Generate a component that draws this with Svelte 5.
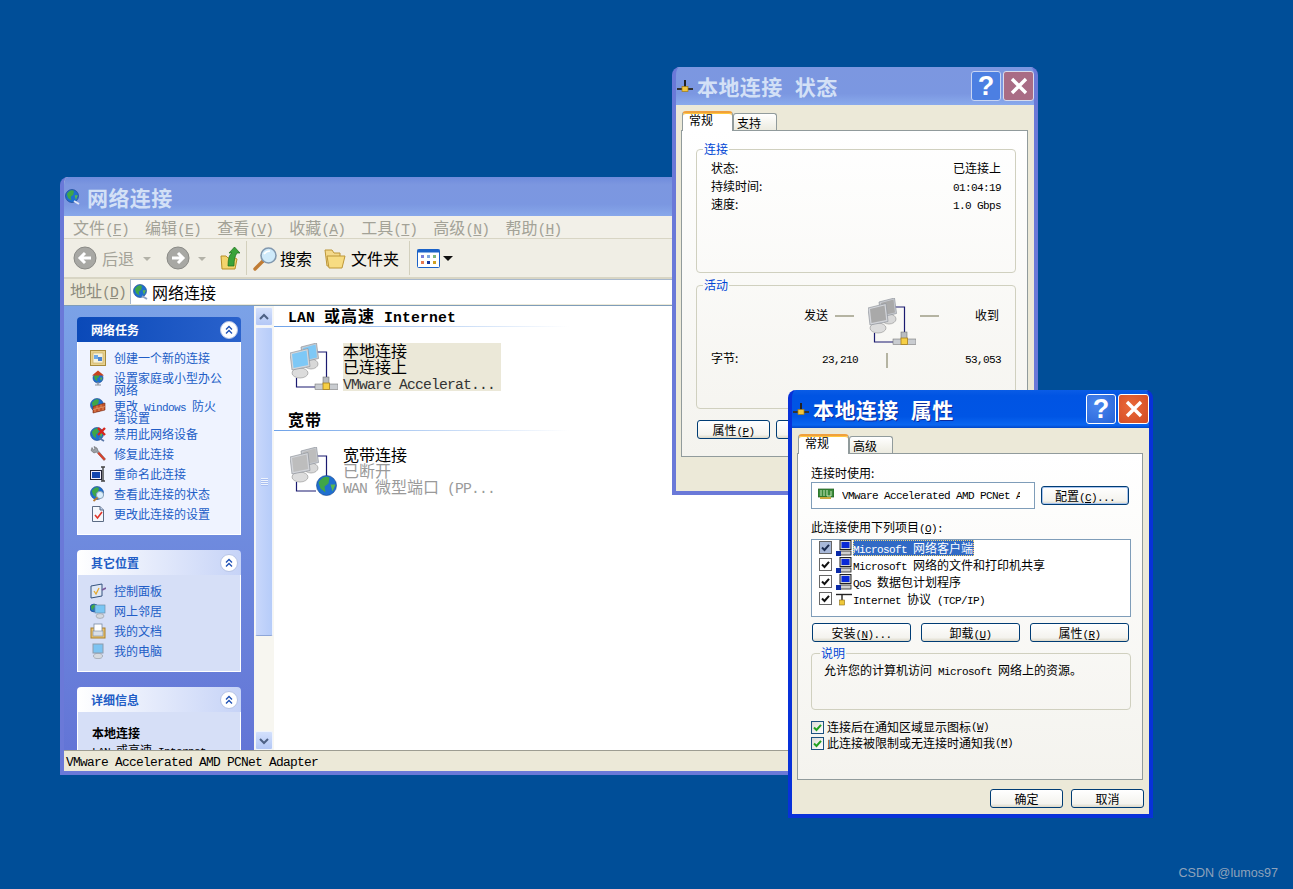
<script>
  const parts = (s) => s.split(/([\x20-\x7e]+)/).filter(Boolean);
  const isLat = (p) => /^[\x20-\x7e]/.test(p);
  const mn = (p) => p.split(/(\([A-Z]\))/).filter(Boolean);
  const menus = ['文件(F)', '编辑(E)', '查看(V)', '收藏(A)', '工具(T)', '高级(N)', '帮助(H)'];
  const tasks = [
    ['create', '创建一个新的连接'],
    ['home', '设置家庭或小型办公网络'],
    ['wall', '更改 Windows 防火墙设置'],
    ['off', '禁用此网络设备'],
    ['fix', '修复此连接'],
    ['name', '重命名此连接'],
    ['look', '查看此连接的状态'],
    ['doc', '更改此连接的设置']
  ];
  const places = [['cp', '控制面板'], ['nbr', '网上邻居'], ['docs', '我的文档'], ['pc', '我的电脑']];
  const comps = [
    ['client', 'Microsoft 网络客户端', true],
    ['share', 'Microsoft 网络的文件和打印机共享', false],
    ['share', 'QoS 数据包计划程序', false],
    ['tcp', 'Internet 协议 (TCP/IP)', false]
  ];
</script>

{#snippet T(s)}{#each parts(s) as p}{#if isLat(p)}<span class="lat">{#each mn(p) as m}{#if /^\([A-Z]\)$/.test(m)}(<u>{m[1]}</u>){:else}{m}{/if}{/each}</span>{:else}{p}{/if}{/each}{/snippet}

{#snippet globe(cx, cy, r)}
  <circle {cx} {cy} {r} fill="#1f6fd0" stroke="#123f86" stroke-width=".6" />
  <path d="M{cx - r * 0.8} {cy - r * 0.3}Q{cx - r * 0.3} {cy - r * 1.1} {cx + r * 0.3} {cy - r * 0.8}L{cx + r * 0.2} {cy - r * 0.2}L{cx - r * 0.2} {cy + r * 0.1}L{cx - r * 0.1} {cy + r * 0.7}L{cx - r * 0.6} {cy + r * 0.3}Z" fill="#3fa648" />
  <path d="M{cx + r * 0.4} {cy - r * 0.1}L{cx + r * 0.9} {cy - r * 0.1}L{cx + r * 0.6} {cy + r * 0.6}Z" fill="#5bb84e" />
{/snippet}

{#snippet small(kind)}
  <svg class="ic16" viewBox="0 0 16 16" width="16" height="16">
    {#if kind === 'create'}
      <rect x=".5" y=".5" width="15" height="15" fill="#e9d28f" stroke="#a78b3c" />
      <rect x="3" y="3" width="10" height="10" fill="#f6f2dc" stroke="#c3a65a" stroke-width=".6" />
      <rect x="4" y="5" width="4" height="4" fill="#6ea8e8" /><rect x="8" y="7" width="4" height="4" fill="#4d84d2" />
    {:else if kind === 'home'}
      {@render globe(8, 8, 5)}
      <path d="M8 0.5L14 5.5H2Z" fill="#c8421e" />
      <rect x="7.4" y="12" width="1.2" height="3" fill="#8a8f9a" /><rect x="5" y="14.5" width="6" height="1" fill="#8a8f9a" />
    {:else if kind === 'wall'}
      {@render globe(7, 7, 6.5)}
      <path d="M3 8.5L15 5V12L3 15Z" fill="#c4542a" stroke="#7a2a10" stroke-width=".6" />
      <path d="M3 11.5L15 8.5M7 7.5V10.5M11 6.5V9.5M5 11V14M9 10V13M13 9V12" stroke="#f0b080" stroke-width=".6" />
    {:else if kind === 'off'}
      {@render globe(7, 8, 6.5)}
      <path d="M8 2L15 9M15 2L8 9" stroke="#d8261c" stroke-width="2.4" />
      <path d="M9 12L14 15" stroke="#5a78a8" stroke-width="1.6" />
    {:else if kind === 'fix'}
      <path d="M2 1.5L1 4.5L4 7L6.5 6L14 14.5L15.5 13L8 4.5L7 2L4 0.5L5 3L3.5 4Z" fill="#9ba0a6" stroke="#555" stroke-width=".5" />
      <path d="M7.5 7.5L14 14.5L15.5 13L9 6Z" fill="#d8402c" />
    {:else if kind === 'name'}
      <rect x=".5" y="4.5" width="11" height="9" fill="#eef" stroke="#223" />
      <rect x="2" y="6" width="8" height="6" fill="#1446b0" />
      <path d="M11 1H15M13 1V15M11 15H15" stroke="#444" stroke-width="1.4" fill="none" />
    {:else if kind === 'look'}
      {@render globe(7, 7, 6.5)}
      <circle cx="10" cy="9" r="3.6" fill="#d9eefc" stroke="#8aa2b8" />
      <path d="M7.5 11.5L3.5 15" stroke="#b97a32" stroke-width="1.8" />
    {:else if kind === 'doc'}
      <path d="M2.5 .5H10L13.5 4V15.5H2.5Z" fill="#f4f7fc" stroke="#5b6b84" />
      <path d="M10 .5V4H13.5" fill="#bcd0ee" stroke="#5b6b84" />
      <path d="M5 9L7.5 12L12 6" stroke="#e0352a" stroke-width="1.6" fill="none" />
    {:else if kind === 'cp'}
      <path d="M1 3L12 1V13L1 15Z" fill="#dfe8f6" stroke="#34527f" />
      <path d="M4 8L6 11L9 5" stroke="#e5a82c" stroke-width="1.3" fill="none" />
      <path d="M12 7L16 5" stroke="#7a5a9c" stroke-width="1.6" />
    {:else if kind === 'nbr'}
      {@render globe(4, 5, 4)}
      <rect x="5" y="2" width="10" height="8" fill="#79c6f4" stroke="#6f8fa8" stroke-width=".7" />
      <ellipse cx="10" cy="13" rx="4" ry="2.4" fill="#d4d8de" stroke="#8d939c" stroke-width=".6" />
    {:else if kind === 'docs'}
      <rect x="1" y="5" width="14" height="10" fill="#ecc36e" stroke="#a9802c" />
      <rect x="4" y="1" width="8" height="9" fill="#fff" stroke="#7a8aa2" stroke-width=".8" />
      <rect x="3" y="8" width="10" height="5" fill="#d9dfe8" stroke="#7a8aa2" stroke-width=".6" />
    {:else if kind === 'pc'}
      <rect x="3" y="1" width="10" height="9" fill="#7dc4f2" stroke="#8d9cac" />
      <ellipse cx="8" cy="13" rx="4.500" ry="2.6" fill="#d6dae0" stroke="#8d939c" stroke-width=".6" />
    {/if}
  </svg>
{/snippet}

{#snippet lanIcon(color, tail)}
  <svg class="lan" viewBox="0 0 48 50" width="48" height="50">
    <path d="M27 9H36.5V37" fill="none" stroke="#1a1a70" stroke-width="1.2" />
    <path d="M6.5 35V44H26" fill="none" stroke="#1a1a70" stroke-width="1.2" />
    <ellipse cx="21" cy="21" rx="7" ry="5" fill="#d8d8d8" stroke="#8e8e8e" stroke-width=".6" />
    <path d="M11 4L26.5 0L28.5 15.5L13 19Z" fill="#c9ccd2" stroke="#8f939b" stroke-width=".7" />
    <path d="M13 5L25.5 1.5L27 14.5L14.5 17.5Z" fill={color} />
    <ellipse cx="10" cy="30" rx="8" ry="5" fill="#dcdcdc" stroke="#8e8e8e" stroke-width=".6" />
    <path d="M0 10L18 5.5L20 23.5L2 27Z" fill="#d3d5da" stroke="#8f939b" stroke-width=".7" />
    <path d="M2 11L16.5 7.5L18.2 22L3.5 25Z" fill={color} />
    {#if tail === 'tee'}
      <rect x="33" y="34" width="6" height="9" fill="#b9bcc0" stroke="#666" stroke-width=".5" />
      <rect x="25" y="41" width="23" height="5.5" fill="#c9ccd0" stroke="#666" stroke-width=".5" />
      <rect x="33" y="40" width="6.5" height="6.5" fill="#f6cf45" stroke="#a8801c" stroke-width=".8" />
    {:else}
      {@render globe(36.5, 38.5, 10)}
    {/if}
  </svg>
{/snippet}

{#snippet tee()}
  <svg viewBox="0 0 16 16" width="16" height="16">
    <rect x="7" y="2" width="2" height="8" fill="#222" />
    <rect x="0" y="10" width="16" height="2" fill="#333" />
    <rect x="5" y="8.5" width="6" height="5" fill="#f2c53c" stroke="#9c7a1a" stroke-width=".7" />
  </svg>
{/snippet}

{#snippet title(text)}
  <div class="tbar">
    <span class="ticon">{@render tee()}</span>
    <span class="ttext">{text}</span>
    <span class="tbtn help">?</span>
    <span class="tbtn close">
      <svg viewBox="0 0 20 20" width="20" height="20"><path d="M3 3L17 17M17 3L3 17" stroke="#fff" stroke-width="3.4" /></svg>
    </span>
  </div>
{/snippet}

{#snippet chev()}
  <span class="chev">
    <svg viewBox="0 0 10 10" width="10" height="10"><path d="M2 4.5L5 1.5L8 4.5M2 8.5L5 5.5L8 8.5" stroke="#1c4fb4" stroke-width="1.3" fill="none" /></svg>
  </span>
{/snippet}

{#snippet pcSmall(kind)}
  <svg viewBox="0 0 16 16" width="16" height="16">
    {#if kind === 'tcp'}
      <path d="M0 3.5H16" stroke="#222" stroke-width="1.4" /><path d="M6 4V10" stroke="#222" stroke-width="1.4" />
      <rect x="3.5" y="9" width="5" height="5" fill="#efc83a" stroke="#8a6c14" stroke-width=".6" />
    {:else}
      <rect x="4" y="0.5" width="11" height="9" fill="#d4d4d4" stroke="#222" />
      <rect x="5.5" y="2" width="8" height="6" fill="#0a2ad8" />
      <rect x="4" y="11" width="11" height="4" fill="#cfcfcf" stroke="#222" stroke-width=".8" />
      <rect x="0" y="11" width="5" height="5" fill="#0a2aa8" />
    {/if}
  </svg>
{/snippet}

{#snippet chk(color)}
  <svg viewBox="0 0 11 11" width="11" height="11"><path d="M2 5.5L4.5 8L9 2.8" stroke={color} stroke-width="2" fill="none" /></svg>
{/snippet}

<div class="desk">
  <!-- Network connections window -->
  <section class="win inactive net">
    <header class="nettitle">
      <svg viewBox="0 0 16 18" width="16" height="18">
        {@render globe(7, 8, 6.5)}
        <path d="M9 13L14 16" stroke="#dfe6f5" stroke-width="2" />
      </svg>
      <span>网络连接</span>
    </header>
    <nav class="menu">
      {#each menus as m}<span>{@render T(m)}</span>{/each}
    </nav>
    <div class="tools">
      <span class="round"><svg viewBox="0 0 24 24" width="24" height="24"><circle cx="12" cy="12" r="11" fill="#a8a8a4" stroke="#8a8a86" /><path d="M18 12H8M12 7L7 12L12 17" stroke="#fff" stroke-width="3" fill="none" /></svg></span>
      <span class="tl grey m5">后退</span>
      <span class="caret c1"></span>
      <span class="round m16"><svg viewBox="0 0 24 24" width="24" height="24"><circle cx="12" cy="12" r="11" fill="#a8a8a4" stroke="#8a8a86" /><path d="M6 12H16M12 7L17 12L12 17" stroke="#fff" stroke-width="3" fill="none" /></svg></span>
      <span class="caret c2"></span>
      <svg class="up" viewBox="0 0 20 24" width="20" height="24">
        <path d="M1 10H6L8 12H15L17 13L15 23H2Z" fill="#f3d46c" stroke="#b78f27" />
        <path d="M8 20Q8 9 12 7H9L14.500 1L20 7H17Q14 11 14 20Z" fill="#3aa33a" stroke="#1a6d1a" stroke-width=".7" />
      </svg>
      <i class="sep s1"></i>
      <svg class="srch" viewBox="0 0 25 25" width="25" height="25">
        <path d="M10 15L2 23" stroke="#c07c34" stroke-width="3.4" stroke-linecap="round" />
        <circle cx="15.5" cy="9.5" r="7.5" fill="#cfeafa" stroke="#8298ae" stroke-width="1.6" />
        <path d="M11 8Q13 5 17 5" stroke="#fff" stroke-width="1.6" fill="none" />
      </svg>
      <span class="tl m3">搜索</span>
      <svg class="fold" viewBox="0 0 23 21" width="23" height="21">
        <path d="M1 2H8L10 5H16V18H3Z" fill="#f4d98a" stroke="#bd9637" />
        <path d="M3 8H21L18 20H5Z" fill="#f7dc82" stroke="#bd9637" />
      </svg>
      <span class="tl m4">文件夹</span>
      <i class="sep s2"></i>
      <svg class="view" viewBox="0 0 23 19" width="23" height="19">
        <rect x=".5" y=".5" width="22" height="18" rx="1" fill="#fff" stroke="#1b62c8" />
        <rect x=".5" y=".5" width="22" height="3" fill="#1b62c8" />
        <rect x="4" y="6" width="3" height="3" fill="#7d80d8" /><rect x="10" y="6" width="3" height="3" fill="#7da6e0" /><rect x="16" y="6" width="3" height="3" fill="#7fb87d" />
        <rect x="4" y="12" width="3" height="3" fill="#e87a50" /><rect x="10" y="12" width="3" height="3" fill="#1a3aa0" /><rect x="16" y="12" width="3" height="3" fill="#cfa020" />
      </svg>
      <span class="caret blk"></span>
    </div>
    <div class="addr">
      <span class="alabel">{@render T('地址(D)')}</span>
      <div class="abox">
        <svg viewBox="0 0 16 18" width="16" height="18">
          {@render globe(7, 8, 6.5)}
          <path d="M9 13L14 16" stroke="#8da2c4" stroke-width="2" />
        </svg>
        <span>网络连接</span>
      </div>
    </div>
    <div class="main">
      <aside class="side">
        <div class="panel">
          <div class="phead dark"><b>网络任务</b>{@render chev()}</div>
          <ul class="pbody light">
            {#each tasks as [k, t]}<li>{@render small(k)}<span class="lnk">{@render T(t)}</span></li>{/each}
          </ul>
        </div>
        <div class="panel">
          <div class="phead"><b>其它位置</b>{@render chev()}</div>
          <ul class="pbody">
            {#each places as [k, t]}<li>{@render small(k)}<span class="lnk">{t}</span></li>{/each}
          </ul>
        </div>
        <div class="panel">
          <div class="phead"><b>详细信息</b>{@render chev()}</div>
          <div class="pbody det">
            <strong>本地连接</strong>
            <p>{@render T('LAN 或高速 Internet')}</p>
          </div>
        </div>
      </aside>
      <div class="scroll">
        <span class="sbtn"><svg viewBox="0 0 10 8" width="10" height="8"><path d="M1 6L5 2L9 6" stroke="#4d6185" stroke-width="2" fill="none" /></svg></span>
        <span class="thumb"><i></i></span>
        <span class="track"></span>
        <span class="sbtn"><svg viewBox="0 0 10 8" width="10" height="8"><path d="M1 2L5 6L9 2" stroke="#4d6185" stroke-width="2" fill="none" /></svg></span>
      </div>
      <div class="list">
        <h3>{@render T('LAN 或高速 Internet')}</h3>
        <div class="conn">
          {@render lanIcon('#7ec8f6', 'tee')}
          <div class="ctext sel">
            <span>本地连接</span><span>已连接上</span><span class="dim">{@render T('VMware Accelerat...')}</span>
          </div>
        </div>
        <h3 class="h2">宽带</h3>
        <div class="conn">
          {@render lanIcon('#bdbdbd', 'globe')}
          <div class="ctext">
            <span>宽带连接</span><span class="gry">已断开</span><span class="gry">{@render T('WAN 微型端口 (PP...')}</span>
          </div>
        </div>
      </div>
    </div>
    <footer class="stat">{@render T('VMware Accelerated AMD PCNet Adapter')}</footer>
  </section>

  <!-- Status dialog -->
  <section class="win inactive dlg status">
    {@render title('本地连接 状态')}
    <div class="client">
      <div class="tabs"><span class="tab on">常规</span><span class="tab">支持</span></div>
      <div class="page st">
        <fieldset class="grp">
          <legend>连接</legend>
          <div class="kv"><span>状态:</span><span>已连接上</span></div>
          <div class="kv"><span>持续时间:</span><span>{@render T('01:04:19')}</span></div>
          <div class="kv"><span>速度:</span><span>{@render T('1.0 Gbps')}</span></div>
        </fieldset>
        <fieldset class="grp act">
          <legend>活动</legend>
          <div class="flow">
            <span class="send">发送</span><i class="dash d1"></i>
            <span class="ficon">{@render lanIcon('#a9a9a9', 'tee')}</span>
            <i class="dash d2"></i><span class="recv">收到</span>
          </div>
          <div class="bytes">
            <span class="bl">字节:</span><span class="bv">{@render T('23,210')}</span><i class="vbar"></i><span class="br">{@render T('53,053')}</span>
          </div>
        </fieldset>
        <div class="btns"><button>{@render T('属性(P)')}</button><button>{@render T('禁用(D)')}</button></div>
      </div>
    </div>
  </section>

  <!-- Properties dialog -->
  <section class="win active dlg props">
    {@render title('本地连接 属性')}
    <div class="client">
      <div class="tabs"><span class="tab on">常规</span><span class="tab">高级</span></div>
      <div class="page pr">
        <div class="lb">连接时使用:</div>
        <div class="adapter">
          <div class="field">
            <svg viewBox="0 0 16 12" width="16" height="12">
              <rect x="0" y="1" width="16" height="8" fill="#3a8a3a" stroke="#1e5a1e" stroke-width=".7" />
              <path d="M3 2V8M6 2V8M9 2V8H13V3" stroke="#d6f0c8" stroke-width=".9" fill="none" />
              <rect x="2" y="9" width="11" height="2" fill="#c9a83c" />
            </svg>
            <span class="ftxt">{@render T('VMware Accelerated AMD PCNet Adapter')}</span>
          </div>
          <button class="cfg">{@render T('配置(C)...')}</button>
        </div>
        <div class="lb lb2">{@render T('此连接使用下列项目(O):')}</div>
        <div class="items">
          {#each comps as [k, t, s]}
            <div class="item">
              <span class="cb" class:shade={s}>{@render chk(s ? '#1c2c50' : '#111')}</span>
              {@render pcSmall(k)}
              <span class="itxt" class:hl={s}>{@render T(t)}</span>
            </div>
          {/each}
        </div>
        <div class="acts">
          <button>{@render T('安装(N)...')}</button><button>{@render T('卸载(U)')}</button><button>{@render T('属性(R)')}</button>
        </div>
        <fieldset class="grp desc">
          <legend>说明</legend>
          <p>{@render T('允许您的计算机访问 Microsoft 网络上的资源。')}</p>
        </fieldset>
        <div class="opt o1"><span class="cb xp">{@render chk('#21a121')}</span>{@render T('连接后在通知区域显示图标(W)')}</div>
        <div class="opt"><span class="cb xp">{@render chk('#21a121')}</span>{@render T('此连接被限制或无连接时通知我(M)')}</div>
      </div>
      <div class="okrow"><button>确定</button><button>取消</button></div>
    </div>
  </section>

  <span class="mark">CSDN @lumos97</span>
</div>

<style>
  :global(body) { margin: 0; background: #004e98; }
  .desk {
    position: relative; width: 1293px; height: 889px; overflow: hidden; background: #004e98;
    font: 12px/16px "Noto Sans CJK SC", "Liberation Sans", sans-serif; color: #000;
  }
  .lat { font-family: "Liberation Mono", monospace; font-size: .92em; letter-spacing: -.0565em; white-space: pre; line-height: 0; }
  u { text-decoration-thickness: 1px; }

  .win { position: absolute; box-sizing: border-box; border: solid; border-width: 0 4px 4px; border-radius: 8px 8px 0 0; display: flex; flex-direction: column; overflow: hidden; }
  .inactive { border-color: #6a79d8; background: linear-gradient(#7c97e0, #7b97e1 70%, #8aaaec) top/100% 38px no-repeat, #ece9d8; }
  .active { border-color: #0831d9; background: linear-gradient(#0a5ce6, #0054e3 15%, #0055e5 70%, #0a66f0 92%, #0046c8) top/100% 38px no-repeat, #ece9d8; }

  /* network window */
  .net { left: 60px; top: 177px; width: 800px; height: 598px; background: #ece9d8; }
  .nettitle { height: 39px; margin: 0 -4px; padding-left: 5px; display: flex; align-items: center; background: linear-gradient(#6f8bdc, #7c97e0 20%, #7b97e1 70%, #88a8ea); color: #d3e0f6; font-size: 21px; font-weight: 700; }
  .nettitle span { margin-left: 6px; letter-spacing: .4px; }
  .menu { height: 23px; display: flex; align-items: center; gap: 16px; padding-left: 9px; background: #f2f0e8; color: #a3a297; font-size: 16px; border-bottom: 1px solid #d8d5c4; box-sizing: border-box; }
  .tools { height: 40px; display: flex; align-items: center; background: #f0eee5; padding-left: 9px; box-sizing: border-box; border-bottom: 2px solid #d8d5c4; font-size: 16px; }
  .round { display: flex; }
  .tl { line-height: 20px; }
  .grey { color: #a4a399; }
  .m5 { margin-left: 5px; } .m4 { margin-left: 4px; } .m3 { margin-left: 2px; } .m16 { margin-left: 15px; }
  .caret { width: 0; height: 0; border: solid transparent; border-width: 4px 4px 0; border-top-color: #b3b2a8; margin-top: 1px; }
  .c1 { margin-left: 9px; } .c2 { margin-left: 8px; }
  .caret.blk { border-width: 5px 5px 0; border-top-color: #111; margin-left: 3px; }
  .up { margin-left: 14px; }
  .sep { width: 1px; height: 34px; background: #d3d0bd; }
  .s1 { margin-left: 6px; } .s2 { margin-left: 10px; }
  .srch { margin-left: 6px; }
  .fold { margin-left: 12px; }
  .view { margin-left: 7px; }
  .addr { height: 26px; display: flex; align-items: stretch; background: #ece9d8; padding: 0 0 1px 6px; box-sizing: border-box; font-size: 16px; color: #8d8b7d; }
  .alabel { width: 60px; line-height: 23px; }
  .abox { flex: 1; background: #fff; border: 1px solid #a8b8cc; border-width: 1px 0 0 1px; display: flex; align-items: center; color: #000; padding-left: 2px; }
  .abox span { margin-left: 3px; }

  .main { height: 445px; display: flex; background: #fff; border-top: 1px solid #7f9db9; box-sizing: border-box; }
  .side { width: 190px; flex: none; box-sizing: border-box; padding: 11px 0 0 13px; background: linear-gradient(#7ba2e7, #6375d6); overflow: hidden; display: flex; flex-direction: column; gap: 15px; }
  .panel { width: 164px; flex: none; }
  .phead { height: 25px; box-sizing: border-box; display: flex; align-items: center; padding: 0 3px 0 14px; border-radius: 4px 4px 0 0; background: linear-gradient(90deg, #fff, #c6d3f7); color: #215dc6; }
  .phead.dark { background: linear-gradient(90deg, #0a49b8, #2a62cc); color: #fff; }
  .phead b { flex: 1; font-weight: 700; }
  .chev { width: 18px; height: 18px; border-radius: 50%; background: #fff; border: 1px solid #b6c4e6; box-sizing: border-box; display: flex; align-items: center; justify-content: center; }
  .pbody { margin: 0; list-style: none; box-sizing: border-box; background: #d6dff7; border: 1px solid #fff; border-top: 0; padding: 10px 0 0 12px; display: flex; flex-direction: column; height: 97px; }
  .pbody.light { background: #eff3ff; height: 193px; }
  .pbody li { display: flex; align-items: flex-start; box-sizing: border-box; min-height: 20px; padding-bottom: 4px; }
  .ic16 { flex: none; margin: -2px 0; }
  .lnk { margin-left: 8px; width: 112px; line-height: 12px; font-size: 12px; color: #215dc6; }
  .pbody.det { display: block; height: 60px; padding: 13px 0 0 14px; overflow: hidden; }
  .det strong { display: block; font-weight: 700; line-height: 16px; }
  .det p { margin: 1px 0 0; line-height: 16px; white-space: nowrap; }

  .scroll { width: 20px; flex: none; display: flex; flex-direction: column; align-items: center; background: #f7f6f0; padding-top: 1px; box-sizing: border-box; gap: 1px; }
  .sbtn { width: 18px; height: 19px; flex: none; background: linear-gradient(#d3e0fc, #b4c8f6); border: 1px solid #f0f4fc; border-radius: 2px; box-sizing: border-box; display: flex; align-items: center; justify-content: center; }
  .thumb { width: 18px; height: 309px; flex: none; background: linear-gradient(90deg, #c8d7fb, #b6ccf9); border: 1px solid #f0f4fc; border-bottom-color: #8ea6d8; border-radius: 2px; box-sizing: border-box; display: flex; align-items: center; justify-content: center; }
  .thumb i { width: 7px; height: 8px; background: repeating-linear-gradient(#eef3fd 0 1px, #a8bef0 1px 2px); }
  .track { flex: 1; }

  .list { flex: 1; min-width: 0; background: #fff; }
  .list h3 { margin: 0; height: 21px; box-sizing: border-box; font-size: 16px; line-height: 19px; font-weight: 700; letter-spacing: 1px; padding-left: 14px; background: linear-gradient(90deg, #6ea2e8, #fff 295px) bottom/100% 1px no-repeat; }
  .list h3 .lat { font-weight: 700; letter-spacing: .17px; }
  .list h3.h2 { margin-top: 17px; }
  .conn { display: flex; margin: 16px 0 0 16px; }
  .lan { display: block; flex: none; }
  .ctext { margin-left: 5px; width: 158px; height: 48px; display: flex; flex-direction: column; font-size: 16px; line-height: 16px; white-space: nowrap; }
  .ctext span { height: 16px; flex: none; }
  .ctext span:first-child { margin-top: -1px; }
  .sel { background: #ebe8d8; }
  .dim { color: #333; }
  .gry { color: #9a9a9a; }
  .stat { height: 21px; flex: none; padding-left: 2px; font-size: 14px; line-height: 18px; background: #ece9d8; border-top: 1px solid #9d9d92; box-sizing: border-box; white-space: nowrap; }

  /* dialogs */
  .dlg { width: 366px; height: 428px; }
  .status { left: 672px; top: 67px; }
  .props { left: 788px; top: 390px; width: 365px; }
  .tbar { height: 38px; flex: none; display: flex; align-items: center; margin: 0 -4px; padding-left: 5px; }
  .ticon { display: flex; margin-right: 4px; }
  .ttext { flex: 1; font-size: 21px; font-weight: 700; white-space: pre; letter-spacing: .4px; word-spacing: 7px; }
  .inactive .ttext { color: #d3e0f6; }
  .active .ttext { color: #fff; text-shadow: 1px 1px 0 #0a2a9c; }
  .tbtn { width: 30px; height: 30px; box-sizing: border-box; border: 1px solid #fff; border-radius: 3px; margin-right: 2px; display: flex; align-items: center; justify-content: center; color: #fff; font: 700 27px/28px "Liberation Sans", sans-serif; }
  .tbtn.close { margin-right: 4px; width: 31px; }
  .help { background: radial-gradient(circle at 35% 35%, #4a86ee, #2563d8); }
  .close { background: radial-gradient(circle at 40% 40%, #ea6a3a, #d24a22); }
  .inactive .help { background: #4c7fe2; border-color: #c8d5f3; }
  .inactive .close { background: #a96c85; border-color: #d8dcec; }

  .client { flex: 1; min-height: 0; display: flex; flex-direction: column; background: #ece9d8; padding: 8px 6px 0 5px; box-sizing: border-box; }
  .tabs { display: flex; align-items: flex-end; height: 18px; padding-left: 1px; position: relative; z-index: 1; margin-bottom: -1px; }
  .tab { width: 44px; height: 17px; box-sizing: border-box; border: 1px solid #919b9c; border-bottom: 0; border-radius: 3px 3px 0 0; background: linear-gradient(#fff, #ecebe0); line-height: 17px; margin-bottom: 1px; padding-left: 3px; }
  .tab.on { width: 51px; height: 20px; margin-bottom: 0; border-top: 2px solid #f0a03c; border-radius: 4px 4px 0 0; background: #fff; line-height: 14px; padding-left: 6px; box-shadow: inset 0 1px 0 #ffc73c; }
  .page { border: 1px solid #919b9c; background: linear-gradient(#fff, #f4f3ee); box-sizing: border-box; flex: none; }
  .page.st { height: 327px; width: 347px; padding: 11px 0 0 14px; }
  .page.pr { height: 327px; width: 346px; padding: 11px 0 0 13px; }

  .grp { margin: 0; padding: 0; box-sizing: border-box; border: 1px solid #d0d0bf; border-radius: 4px; width: 320px; min-width: 0; }
  .grp legend { padding: 0 1px; line-height: 14px; color: #0046d5; }
  .st .grp { height: 131px; padding: 3px 14px 0; }
  .st .grp legend { margin-left: -8px; }
  .kv { display: flex; justify-content: space-between; height: 18px; line-height: 18px; }
  .st .act { margin-top: 5px; padding-top: 6px; }
  .flow { display: flex; height: 50px; margin-left: 93px; align-items: flex-start; }
  .send, .recv { margin-top: 9px; }
  .dash { width: 19px; height: 2px; background: #b5b4a2; margin-top: 17px; }
  .d1 { margin-left: 7px; } .d2 { margin-left: 4px; }
  .ficon { margin-left: 14px; }
  .recv { margin-left: 36px; }
  .bytes { display: flex; height: 18px; line-height: 16px; margin-top: 2px; }
  .bl { width: 111px; }
  .bv { width: 36px; text-align: right; }
  .vbar { width: 2px; height: 15px; margin: 3px 0 0 28px; background: #b5b4a2; }
  .br { margin-left: auto; }
  .btns { display: flex; gap: 6px; margin: 11px 0 0 1px; }
  button { font: inherit; padding: 0; width: 73px; height: 19px; line-height: 16px; border: 1px solid #003c74; border-radius: 3px; background: linear-gradient(#fff, #f4f3ee 80%, #dcd8c8); color: #000; box-sizing: border-box; }

  .lb { height: 16px; line-height: 16px; }
  .lb2 { margin-top: 10px; }
  .adapter { display: flex; margin-top: 1px; align-items: flex-start; }
  .field { width: 224px; height: 27px; border: 1px solid #7f9db9; background: #fff; box-sizing: border-box; display: flex; align-items: center; padding: 0 0 4px 6px; overflow: hidden; }
  .ftxt { margin-left: 8px; width: 178px; overflow: hidden; white-space: nowrap; flex: none; }
  .cfg { width: 88px; height: 19px; margin: 4px 0 0 6px; box-shadow: inset 0 0 0 1px #a8c4ee; }
  .items { width: 320px; height: 78px; margin-top: 4px; border: 1px solid #7f9db9; background: #fff; box-sizing: border-box; padding: 0 0 0 7px; }
  .item { height: 17px; display: flex; align-items: center; white-space: nowrap; }
  .item:first-child { margin-top: -1px; }
  .cb { width: 13px; height: 13px; box-sizing: border-box; border: 1px solid #666; background: #fff; display: inline-flex; align-items: center; justify-content: center; margin-right: 4px; flex: none; }
  .cb.shade { background: #a8b8d8; }
  .item svg { flex: none; }
  .itxt { margin-left: 1px; height: 16px; line-height: 16px; padding-right: 1px; }
  .hl { background: #316ac5; color: #fff; outline: 1px dotted #f4d878; outline-offset: -1px; }
  .acts { display: flex; gap: 10px; margin: 6px 0 0 1px; }
  .acts button { width: 99px; }
  .desc { height: 64px; margin-top: 4px; padding: 2px 0 0 12px; }
  .desc legend { margin-left: -4px; }
  .desc p { margin: 0; line-height: 16px; }
  .opt { display: flex; align-items: center; height: 16px; white-space: nowrap; }
  .o1 { margin-top: 9px; }
  .cb.xp { border-color: #1c5180; background: linear-gradient(135deg, #dcdcd7, #fff); margin-right: 3px; }
  .okrow { display: flex; justify-content: flex-end; gap: 8px; margin-top: 9px; width: 347px; }

  .mark { position: absolute; right: 15px; bottom: 8px; color: #8ea2bb; font: 12.600px/16px "Liberation Sans", sans-serif; }
</style>
